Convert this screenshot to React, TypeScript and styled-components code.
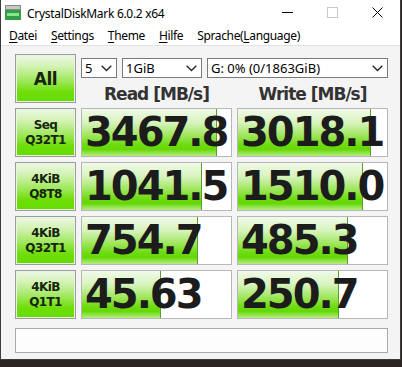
import styled, { createGlobalStyle } from 'styled-components'

const GlobalStyle = createGlobalStyle`
  html, body {
    margin: 0;
    padding: 0;
    background: #2b2422;
  }
  #root {
    width: 402px;
    height: 367px;
  }
`

const Window = styled.div`
  width: 401px;
  box-sizing: border-box;
  border: 1px solid #3b3b3b;
  border-top: none;
  background: #f4f4f4;
  display: flex;
  flex-direction: column;
`

const TitleBar = styled.div`
  height: 25px;
  background: #fff;
  display: flex;
  align-items: center;
  padding-left: 4px;
  font-family: "Noto Sans", "Open Sans", sans-serif;
  font-size: 12px;
  letter-spacing: -0.3px;
  color: #000;
`

const TitleText = styled.span`
  margin-left: 6px;
  flex: 1;
  margin-top: 1px;
`

const WinButton = styled.div`
  width: 45px;
  height: 25px;
  display: flex;
  align-items: center;
  justify-content: center;
`

const MenuBar = styled.div`
  height: 20px;
  background: #fff;
  border-bottom: 1px solid #e2e2e2;
  display: flex;
  align-items: center;
  padding-left: 1px;
  font-family: "Noto Sans", "Open Sans", sans-serif;
  font-size: 12px;
  letter-spacing: -0.35px;
  color: #000;
`

const MenuItem = styled.span`
  padding: 0 7px;
  u {
    text-underline-offset: 2px;
  }
`

const Content = styled.div`
  padding: 8px 13px 6px 14px;
  display: grid;
  grid-template-columns: 61px 151px 151px;
  grid-template-rows: repeat(5, 49px) 29px;
  gap: 5px;
`

const SideButton = styled.div<{ $big?: boolean }>`
  box-sizing: border-box;
  border: 1px solid #9c9c9c;
  box-shadow: inset 0 0 0 1px #e9f6df;
  background: linear-gradient(to bottom, #eef8e6 0%, #d2f2b2 25%, #9ee85a 55%, #6fde0a 78%, #64dc00 100%);
  display: flex;
  flex-direction: column;
  align-items: center;
  justify-content: center;
  font-family: "DejaVu Sans", Verdana, sans-serif;
  font-weight: bold;
  color: #18240f;
  font-size: ${p => (p.$big ? '17px' : '12px')};
  letter-spacing: ${p => (p.$big ? '-0.5px' : '-0.6px')};
  line-height: ${p => (p.$big ? '20px' : '15px')};
`

const TopPanel = styled.div`
  grid-column: 2 / 4;
  display: flex;
  flex-direction: column;
  padding-top: 4px;
`

const SelectRow = styled.div`
  display: flex;
  gap: 5px;
`

const Combo = styled.div<{ $w: number }>`
  box-sizing: border-box;
  width: ${p => p.$w}px;
  height: 20px;
  background: #fff;
  border: 1px solid #7a7a7a;
  display: flex;
  align-items: center;
  justify-content: space-between;
  padding: 0 4px 0 3px;
  font-family: "Noto Sans", "Open Sans", sans-serif;
  font-size: 13px;
  color: #000;
`

const HeaderRow = styled.div`
  margin-top: 6px;
  display: grid;
  grid-template-columns: 151px 151px;
  gap: 5px;
`

const Header = styled.div`
  text-align: center;
  font-family: "DejaVu Sans", Verdana, sans-serif;
  font-weight: bold;
  font-size: 17px;
  letter-spacing: -1px;
  line-height: 20px;
  color: #333;
`

const Cell = styled.div`
  box-sizing: border-box;
  border: 1px solid #b7b7b7;
  background: #fff;
  display: grid;
  overflow: hidden;
`

const Bar = styled.div`
  grid-area: 1 / 1;
  height: 100%;
  box-sizing: border-box;
  border-right: 1px solid #5c9e2c;
  background: linear-gradient(to bottom, #f1faea 0%, #d6f3bb 30%, #9be556 58%, #6edb10 76%, #66d806 86%, #b6ee86 100%);
`

const Value = styled.div`
  grid-area: 1 / 1;
  z-index: 1;
  padding-left: 3px;
  font-family: "DejaVu Sans", Verdana, sans-serif;
  font-weight: bold;
  font-size: 40px;
  letter-spacing: -2px;
  line-height: 47px;
  color: #1c1c1c;
  white-space: nowrap;
`

const Comment = styled.div`
  grid-column: 1 / -1;
  margin-top: 4px;
  box-sizing: border-box;
  border: 1px solid #a9a9a9;
  background: #fdfdfd;
`

const Chevron = () => (
  <svg width="11" height="7" viewBox="0 0 11 7">
    <polyline points="0.7,0.7 5.5,5.5 10.3,0.7" fill="none" stroke="#222" strokeWidth="1.3" />
  </svg>
)

const AppIcon = () => (
  <svg width="16" height="15" viewBox="0 0 16 15">
    <rect x="0.5" y="0.5" width="15" height="4" fill="#c8c8c8" stroke="#8a8a8a" />
    <rect x="0" y="5" width="16" height="10" fill="#2f9e46" />
    <rect x="2" y="8" width="12" height="3" fill="#8fe08f" />
  </svg>
)

const rows = [
  { label: ['Seq', 'Q32T1'], read: '3467.8', write: '3018.1' },
  { label: ['4KiB', 'Q8T8'], read: '1041.5', write: '1510.0' },
  { label: ['4KiB', 'Q32T1'], read: '754.7', write: '485.3' },
  { label: ['4KiB', 'Q1T1'], read: '45.63', write: '250.7' },
]

const barWidth = (v: string) => {
  const r = Math.log10(parseFloat(v) * 10) / 5
  return `${Math.max(0, Math.min(1, r)) * 100}%`
}

const Score = ({ v }: { v: string }) => (
  <Cell>
    <Bar style={{ width: barWidth(v) }} />
    <Value>{v}</Value>
  </Cell>
)

export default function App() {
  return (
    <>
      <GlobalStyle />
      <Window>
        <TitleBar>
          <AppIcon />
          <TitleText>CrystalDiskMark 6.0.2 x64</TitleText>
          <WinButton>
            <svg width="11" height="2" viewBox="0 0 11 2"><rect width="11" height="1" fill="#000" /></svg>
          </WinButton>
          <WinButton>
            <svg width="11" height="11" viewBox="0 0 11 11"><rect x="0.5" y="0.5" width="10" height="10" fill="none" stroke="#c8c8c8" /></svg>
          </WinButton>
          <WinButton>
            <svg width="11" height="11" viewBox="0 0 11 11">
              <path d="M0.5 0.5 L10.5 10.5 M10.5 0.5 L0.5 10.5" stroke="#000" strokeWidth="1" />
            </svg>
          </WinButton>
        </TitleBar>
        <MenuBar>
          <MenuItem><u>D</u>atei</MenuItem>
          <MenuItem><u>S</u>ettings</MenuItem>
          <MenuItem><u>T</u>heme</MenuItem>
          <MenuItem><u>H</u>ilfe</MenuItem>
          <MenuItem>Sprache(<u>L</u>anguage)</MenuItem>
        </MenuBar>
        <Content>
          <SideButton $big>All</SideButton>
          <TopPanel>
            <SelectRow>
              <Combo $w={36}>5<Chevron /></Combo>
              <Combo $w={80}>1GiB<Chevron /></Combo>
              <Combo $w={181}>G: 0% (0/1863GiB)<Chevron /></Combo>
            </SelectRow>
            <HeaderRow>
              <Header>Read [MB/s]</Header>
              <Header>Write [MB/s]</Header>
            </HeaderRow>
          </TopPanel>
          {rows.map(r => (
            <>
              <SideButton key={r.read + 'b'}>
                <span>{r.label[0]}</span>
                <span>{r.label[1]}</span>
              </SideButton>
              <Score key={r.read} v={r.read} />
              <Score key={r.write} v={r.write} />
            </>
          ))}
          <Comment />
        </Content>
      </Window>
    </>
  )
}
